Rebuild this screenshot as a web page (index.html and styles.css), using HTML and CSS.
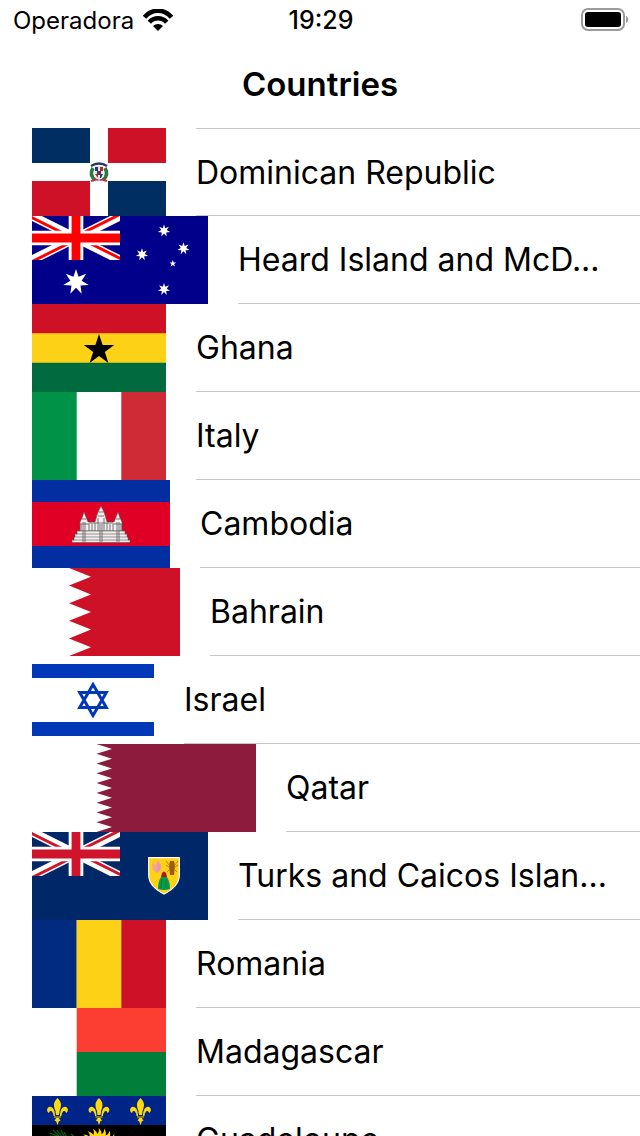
FILE: index.html
```html
<!DOCTYPE html>
<html lang="en">
<head>
<meta charset="utf-8">
<meta name="viewport" content="width=device-width, initial-scale=1">
<title>Countries</title>
<link rel="stylesheet" href="styles.css">
</head>
<body>
<svg class="defs" aria-hidden="true">
  <defs>
    <polygon id="star7" points="0,-9 1.74,-3.6 7.04,-5.61 3.9,-.89 8.77,2 3.13,2.49 3.9,8.11 0,4 -3.9,8.11 -3.13,2.49 -8.77,2 -3.9,-.89 -7.04,-5.61 -1.74,-3.6"/>
    <polygon id="star5" points="0,-10 2.25,-3.09 9.51,-3.09 3.63,1.18 5.88,8.09 0,3.82 -5.88,8.09 -3.63,1.18 -9.51,-3.09 -2.25,-3.09"/>
    <clipPath id="canton"><path d="M0 0h60v30H0z"/></clipPath>
    <clipPath id="quarters"><path d="M30 15h30v15zv15H0zH0V0zV0h30z"/></clipPath>
    <g id="jack" clip-path="url(#canton)">
      <path d="M0 0L60 30M60 0L0 30" stroke="#fff" stroke-width="6"/>
      <path d="M0 0L60 30M60 0L0 30" stroke="currentColor" stroke-width="4" clip-path="url(#quarters)"/>
      <path d="M30 0V30M0 15H60" stroke="#fff" stroke-width="10"/>
      <path d="M30 0V30M0 15H60" stroke="currentColor" stroke-width="6"/>
    </g>
    <g id="lily">
      <path d="M0-13C4-9 4.500-6 2 0C2 2 1.500 3 1.500 4H-1.500C-1.500 3-2 2-2 0C-4.500-6-4-9 0-13Z"/>
      <path d="M2.500 5C2.500-1 5-5 8.500-4C11-3 11 1 8.500 2C8-.5 6-.5 5 1.500C4 3 4 4 4 5Z"/>
      <path d="M-2.500 5C-2.500-1-5-5-8.500-4C-11-3-11 1-8.500 2C-8-.5-6-.5-5 1.500C-4 3-4 4-4 5Z"/>
      <path d="M-1.500 7H1.500L3 10H1.500L0 14L-1.500 10H-3Z"/>
      <path d="M-3.500 6H3.500" stroke="#8b7a24" stroke-width="2"/>
    </g>
    <path id="ray" d="M-2.500-15C-.5-17 .5-19-.5-22C2-20 3-17 2.500-15Z"/>
  </defs>
</svg>

<div class="screen">
  <header class="top">
    <div class="status">
      <div class="carrier">
        <span>Operadora</span>
        <svg width="30" height="22" viewBox="0 0 30 22" role="img" aria-label="Wi-Fi">
          <g fill="none" stroke="#000" stroke-width="4.600">
            <path d="M1.500 8.200C9-.4 21-.4 28.500 8.200"/>
            <path d="M6.300 13.200C11 8 19 8 23.700 13.200"/>
          </g>
          <path d="M15 22L10 17C12.500 14.200 17.500 14.200 20 17Z"/>
        </svg>
      </div>
      <time class="clock">19:29</time>
      <div class="power">
        <svg width="48" height="24" viewBox="0 0 48 24" role="img" aria-label="Battery full">
          <rect x="1" y="1" width="42" height="21" rx="6" fill="none" stroke="#9b9b9b" stroke-width="2"/>
          <rect x="4" y="4" width="36" height="15" rx="3"/>
          <path d="M45 8C48 9 48 14 45 15Z" fill="#9b9b9b"/>
        </svg>
      </div>
    </div>
    <h1 class="title">Countries</h1>
  </header>

  <ul class="list">
    <li class="row">
      <svg class="flag" width="134" height="88" viewBox="0 0 134 88">
        <path fill="#fff" d="M0 0h134v88H0z"/>
        <path fill="#002d62" d="M0 0h58v35H0zM76 53h58v35H76z"/>
        <path fill="#ce1126" d="M76 0h58v35H76zM0 53h58v35H0z"/>
        <path d="M59 38Q67 33 75 38" fill="none" stroke="#1f3a66" stroke-width="2.400"/>
        <path d="M61 40Q57 47 63 52M73 40Q77 47 71 52" fill="none" stroke="#2c7a40" stroke-width="3.600"/>
        <path d="M59 53Q67 50 75 53" fill="none" stroke="#c0303c" stroke-width="2.200"/>
        <path d="M63 38h8v8q0 4-4 6q-4-2-4-6z" fill="#dfe2ea"/>
        <path d="M63 39h3v4h-3zM68 46h3l-2 4h-1z" fill="#1d3d78"/>
        <path d="M68 39h3v4h-3zM63 46h3v4z" fill="#c3202f"/>
        <path d="M65 43h4v4h-4z" fill="#5a3c42"/>
      </svg>
      <div class="cell"><span class="name">Dominican Republic</span></div>
    </li>
    <li class="row">
      <svg class="flag" width="176" height="88" viewBox="0 0 176 88">
        <path fill="#00008b" d="M0 0h176v88H0z"/>
        <svg width="88" height="44" viewBox="0 0 60 30" color="#f00"><use href="#jack"/></svg>
        <g fill="#fff">
          <use href="#star7" transform="translate(44 66) scale(1.45)"/>
          <use href="#star7" transform="translate(132 14.700) scale(.7)"/>
          <use href="#star7" transform="translate(132 73.300) scale(.7)"/>
          <use href="#star7" transform="translate(110 38.500) scale(.7)"/>
          <use href="#star7" transform="translate(151.500 32.500) scale(.7)"/>
          <use href="#star5" transform="translate(140.800 47.700) scale(.36)"/>
        </g>
      </svg>
      <div class="cell"><span class="name">Heard Island and McD...</span></div>
    </li>
    <li class="row">
      <svg class="flag" width="134" height="88" viewBox="0 0 134 88">
        <path fill="#fcd116" d="M0 0h134v88H0z"/>
        <path fill="#ce1126" d="M0 0h134v29.300H0z"/>
        <path fill="#006b3f" d="M0 58.700h134V88H0z"/>
        <use href="#star5" transform="translate(67 46) scale(1.6)"/>
      </svg>
      <div class="cell"><span class="name">Ghana</span></div>
    </li>
    <li class="row">
      <svg class="flag" width="134" height="88" viewBox="0 0 134 88">
        <path fill="#fff" d="M0 0h134v88H0z"/>
        <path fill="#009246" d="M0 0h44.700v88H0z"/>
        <path fill="#ce2b37" d="M89.300 0H134v88H89.300z"/>
      </svg>
      <div class="cell"><span class="name">Italy</span></div>
    </li>
    <li class="row">
      <svg class="flag" width="138" height="88" viewBox="0 0 138 88">
        <path fill="#032ea1" d="M0 0h138v88H0z"/>
        <path fill="#e00025" d="M0 22h138v44H0z"/>
        <g fill="#f4eeee" stroke="#555" stroke-width=".6">
          <path d="M48 51V42L50 38L52 32L54 37L56 42H63L65 35L67 30L69 26L71 30L73 35L75 42H82L84 37L86 32L88 38L90 42V51Z"/>
          <path d="M45 51H93V54H95V57H96V60H98V62.500H40V60H42V57H43V54H45Z"/>
          <path d="M44 54H94M42 57H96M41 60H97" fill="none"/>
        </g>
        <path d="M49 44V51M51 42V62M53 42V62M57 44V51M60 44V51M63 43V51M66 38V51M68 44V62M70 44V62M72 38V51M75 43V51M78 44V51M81 44V51M85 42V62M87 42V62M89 44V51M47 44h10M57 43h24M81 44h10M66 36h6M67 32h4M50 39h4M84 39h4" fill="none" stroke="#555" stroke-width=".8"/>
      </svg>
      <div class="cell"><span class="name">Cambodia</span></div>
    </li>
    <li class="row">
      <svg class="flag" width="148" height="88" viewBox="0 0 148 88">
        <path fill="#fff" d="M0 0h60v88H0z"/>
        <path fill="#ce1126" d="M148 0H37L59 8.800 37 17.600 59 26.400 37 35.200 59 44 37 52.800 59 61.600 37 70.400 59 79.200 37 88H148z"/>
      </svg>
      <div class="cell"><span class="name">Bahrain</span></div>
    </li>
    <li class="row">
      <svg class="flag" width="122" height="88" viewBox="0 0 122 88">
        <path fill="#fff" d="M0 0h122v88H0z"/>
        <path fill="#0038b8" d="M0 8h122v14H0zM0 66h122v14H0z"/>
        <path d="M61 28.600L74.300 51.600H47.700ZM61 59.400L47.700 36.400H74.300Z" fill="none" stroke="#0038b8" stroke-width="3"/>
      </svg>
      <div class="cell"><span class="name">Israel</span></div>
    </li>
    <li class="row">
      <svg class="flag" width="224" height="88" viewBox="0 0 224 88">
        <path fill="#fff" d="M0 0h80v88H0z"/>
        <path fill="#8d1b3d" d="M224 0H64.500L80 4.900 64.500 9.800 80 14.700 64.500 19.600 80 24.400 64.500 29.300 80 34.200 64.500 39.100 80 44 64.500 48.900 80 53.800 64.500 58.700 80 63.600 64.500 68.400 80 73.300 64.500 78.200 80 83.100 64.500 88H224z"/>
      </svg>
      <div class="cell"><span class="name">Qatar</span></div>
    </li>
    <li class="row">
      <svg class="flag" width="176" height="88" viewBox="0 0 176 88">
        <path fill="#002868" d="M0 0h176v88H0z"/>
        <svg width="88" height="44" viewBox="0 0 60 30" color="#cf142b"><use href="#jack"/></svg>
        <path d="M116.700 25.700H147.300V43C147.300 52 140 58 132 62C124 58 116.700 52 116.700 43Z" fill="#fcd116" stroke="#fff" stroke-width="1.200"/>
        <path d="M120 31L123 33 126 28 129 33V38L125 41 121 38Z" fill="#f3a68f"/>
        <path d="M126 30L129 34 128 39 124 40Z" fill="#e995ae"/>
        <path d="M138 29h4l1 5-1 9h-4l-1-9z" fill="#9a5a12"/>
        <path d="M134 29L138 34M146 29L142 34M134 33L138 36M146 33L142 36M135 40L138 37M145 40L142 37" fill="none" stroke="#b9801a" stroke-width="1"/>
        <path d="M129 45L130 41Q132 38 134 41L135 45Z" fill="#b3122a"/>
        <path d="M129 45H135Q138 50 138 57Q132 59 126 57Q126 50 129 45Z" fill="#089a4b"/>
        <path d="M130 47L129 56M134 47L134 56" stroke="#087a3c" stroke-width="1"/>
      </svg>
      <div class="cell"><span class="name">Turks and Caicos Islan...</span></div>
    </li>
    <li class="row">
      <svg class="flag" width="134" height="88" viewBox="0 0 134 88">
        <path fill="#002b7f" d="M0 0h44.700v88H0z"/>
        <path fill="#fcd116" d="M44.700 0h44.600v88H44.700z"/>
        <path fill="#ce1126" d="M89.300 0H134v88H89.300z"/>
      </svg>
      <div class="cell"><span class="name">Romania</span></div>
    </li>
    <li class="row">
      <svg class="flag" width="134" height="88" viewBox="0 0 134 88">
        <path fill="#fff" d="M0 0h45v88H0z"/>
        <path fill="#fc3d32" d="M44.700 0H134v44H44.700z"/>
        <path fill="#007e3a" d="M44.700 44H134v44H44.700z"/>
      </svg>
      <div class="cell"><span class="name">Madagascar</span></div>
    </li>
    <li class="row">
      <svg class="flag" width="134" height="88" viewBox="0 0 134 88">
        <path d="M0 0h134v88H0z"/>
        <path fill="#002488" d="M0 0h134v29H0z"/>
        <g fill="#ffda0a">
          <use href="#lily" x="25.500" y="15"/>
          <use href="#lily" x="67" y="15"/>
          <use href="#lily" x="108.500" y="15"/>
        </g>
        <g fill="#ffda0a" transform="translate(67 54)">
          <circle r="16"/>
          <use href="#ray"/>
          <use href="#ray" transform="rotate(15)"/><use href="#ray" transform="rotate(-15)"/>
          <use href="#ray" transform="rotate(30)"/><use href="#ray" transform="rotate(-30)"/>
          <use href="#ray" transform="rotate(45)"/><use href="#ray" transform="rotate(-45)"/>
          <use href="#ray" transform="rotate(60)"/><use href="#ray" transform="rotate(-60)"/>
          <use href="#ray" transform="rotate(75)"/><use href="#ray" transform="rotate(-75)"/>
        </g>
        <path d="M18 37L40 46M21 34L27 40M25 34L30 41M29 34L33 42M32 36L36 44M18 40L28 41M20 43L31 42M39 38L44 42" fill="none" stroke="#0a6418" stroke-width="1.200"/>
      </svg>
      <div class="cell"><span class="name">Guadeloupe</span></div>
    </li>
  </ul>
</div>
</body>
</html>
```
FILE: styles.css
```css
* {
  box-sizing: border-box;
}

body {
  margin: 0;
  background: #fff;
  color: #000;
  font-family: Inter, "Liberation Sans", sans-serif;
}

.defs {
  position: absolute;
  width: 0;
  height: 0;
}

.screen {
  display: flex;
  flex-direction: column;
  height: 100vh;
}

.status {
  display: grid;
  grid-template-columns: 1fr auto 1fr;
  align-items: center;
  height: 40px;
  padding: 0 11px 0 13px;
  font-size: 24px;
}

.carrier {
  display: flex;
  align-items: center;
  gap: 9px;
}

.clock {
  font-size: 25px;
  font-weight: 500;
}

.power {
  display: flex;
  justify-content: flex-end;
}

.title {
  margin: 0;
  font-size: 33px;
  font-weight: 600;
  line-height: 88px;
  text-align: center;
}

.list {
  flex: 1;
  min-height: 0;
  margin: 0;
  padding: 0;
  overflow-y: auto;
  scrollbar-width: none;
  list-style: none;
}

.row {
  display: flex;
  gap: 30px;
  height: 88px;
  padding-left: 32px;
}

.flag {
  flex: none;
  display: block;
}

.cell {
  flex: 1;
  min-width: 0;
  padding-right: 16px;
  border-bottom: 1px solid #c6c6c8;
}

.row:first-child .cell {
  border-top: 1px solid #c6c6c8;
}

.name {
  display: block;
  overflow: hidden;
  font-size: 32px;
  line-height: 88px;
  text-overflow: ellipsis;
  white-space: nowrap;
}
```
